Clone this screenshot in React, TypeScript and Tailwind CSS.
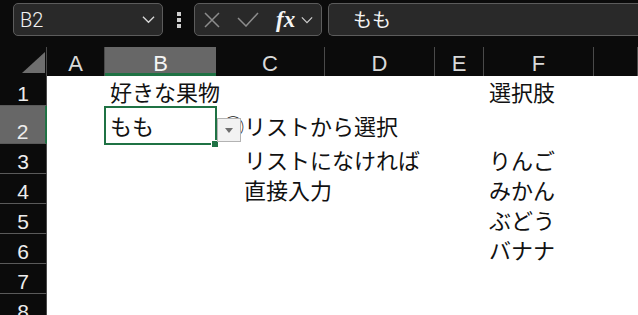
import React from 'react';

const cols = ['A', 'B', 'C', 'D', 'E', 'F', ''];
const rows = [1, 2, 3, 4, 5, 6, 7, 8];

const cells: Record<string, string> = {
  B1: '好きな果物',
  F1: '選択肢',
  B2: 'もも',
  C2: '①リストから選択',
  C3: '\u3000リストになければ',
  C4: '\u3000直接入力',
  F3: 'りんご',
  F4: 'みかん',
  F5: 'ぶどう',
  F6: 'バナナ',
};

function Chevron({ className }: { className?: string }) {
  return (
    <svg viewBox="0 0 14 9" className={className} fill="none" stroke="currentColor" strokeWidth="1.4">
      <path d="M1 1.5 L7 7.5 L13 1.5" />
    </svg>
  );
}

function FormulaBar() {
  return (
    <div className="h-[47px] bg-[#0b0b0b] flex items-start pt-[3px] pl-[13px] overflow-hidden">
      <div className="w-[150px] h-[33px] rounded-[5px] border border-[#5c5c5c] bg-[#292929] flex items-center justify-between pl-[6px] pr-[7px]">
        <span className="text-[20px] text-[#f2f2f2] font-light" style={{ fontFamily: 'Roboto, "Liberation Sans", sans-serif' }}>
          B2
        </span>
        <Chevron className="w-[13px] h-[9px] text-[#d8d8d8]" />
      </div>
      <div className="w-[31px] h-[33px] flex flex-col items-center justify-center gap-[2px]">
        <div className="w-[4px] h-[4px] bg-[#cfcfcf]" />
        <div className="w-[4px] h-[4px] bg-[#cfcfcf]" />
        <div className="w-[4px] h-[4px] bg-[#cfcfcf]" />
      </div>
      <div className="w-[128px] h-[33px] rounded-[5px] border border-[#5c5c5c] bg-[#292929] flex items-center pl-[9px]">
        <svg viewBox="0 0 16 16" className="w-[16px] h-[16px] text-[#8c8c8c]" fill="none" stroke="currentColor" strokeWidth="1.5">
          <path d="M1 1 L15 15 M15 1 L1 15" />
        </svg>
        <svg viewBox="0 0 22 15" className="w-[22px] h-[15px] ml-[17px] text-[#8c8c8c]" fill="none" stroke="currentColor" strokeWidth="1.5">
          <path d="M1 6 L9 14 L21 1" />
        </svg>
        <span
          className="ml-[17px] text-[23px] italic font-bold text-[#f4f4f4] leading-none"
          style={{ fontFamily: '"Liberation Serif", "DejaVu Serif", serif' }}
        >
          fx
        </span>
        <Chevron className="ml-[6px] w-[12px] h-[8px] text-[#cfcfcf]" />
      </div>
      <div className="ml-[6px] flex-1 h-[33px] rounded-l-[5px] border border-r-0 border-[#5c5c5c] bg-[#292929] flex items-center pl-[24px] mr-[-8px]">
        <span className="text-[19px] text-[#f4f4f4]" style={{ fontFamily: '"Noto Sans CJK JP", sans-serif' }}>
          もも
        </span>
      </div>
    </div>
  );
}

export default function App() {
  return (
    <div className="w-[638px] h-[315px] overflow-hidden bg-white">
      <FormulaBar />
      <div className="relative">
        <div className="grid grid-cols-[47px_58px_111px_109px_110px_49px_110px_1fr] grid-rows-[29px_30px_38px_30px_30px_30px_30px_30px_30px]">
          <div className="bg-[#0b0b0b] border-r border-[#4a4a4a] relative">
            <svg viewBox="0 0 23 21" className="absolute left-[22px] top-[5px] w-[23px] h-[21px]">
              <path d="M23 0 L23 21 L0 21 Z" fill="#6e6e6e" />
            </svg>
          </div>
          {cols.map((c) => (
            <div
              key={c || 'G'}
              className={
                c === 'B'
                  ? 'bg-[#676767] border-b-[3px] border-[#1f7244] flex justify-center items-start pt-[6px]'
                  : 'bg-[#0b0b0b] border-r border-[#4a4a4a] flex justify-center items-start pt-[6px]'
              }
            >
              <span
                className={c === 'B' ? 'text-[22px] leading-none text-[#f4f4f4]' : 'text-[22px] leading-none text-[#d9d9d9]'}
                style={{ fontFamily: '"Liberation Sans", Arial, sans-serif' }}
              >
                {c}
              </span>
            </div>
          ))}
          {rows.map((r) => (
            <React.Fragment key={r}>
              <div
                className={
                  r === 2
                    ? 'bg-[#676767] border-r-2 border-[#1f7244] border-b border-b-[#5a5a5a] flex justify-center items-end pb-[1px]'
                    : 'bg-[#0b0b0b] border-r border-r-[#4a4a4a] border-b border-b-[#5a5a5a] flex justify-center items-end pb-[1px]'
                }
              >
                <span className="text-[21px] leading-none text-[#ededed]" style={{ fontFamily: '"Liberation Sans", Arial, sans-serif' }}>
                  {r}
                </span>
              </div>
              {cols.map((c) => {
                const v = cells[`${c}${r}`];
                return (
                  <div
                    key={c || 'G'}
                    className={c === 'C' ? 'flex items-center pl-[6px] whitespace-nowrap' : 'flex items-center pl-[5px] whitespace-nowrap'}
                  >
                    {v && (
                      <span
                        className="text-[22px] leading-none text-[#111]"
                        style={{ fontFamily: '"Noto Sans CJK JP", sans-serif' }}
                      >
                        {v}
                      </span>
                    )}
                  </div>
                );
              })}
            </React.Fragment>
          ))}
        </div>

        {/* active cell B2 */}
        <div className="absolute left-[104px] top-[59px] w-[113px] h-[39px] border-2 border-[#1f7244]" />
        <div className="absolute left-[211px] top-[93px] w-[8px] h-[8px] bg-[#1f7244] border border-white" />

        {/* validation dropdown */}
        <div className="absolute left-[217px] top-[71px] w-[24px] h-[24px] bg-[#f2f2f2] border border-[#b3b3b3] flex items-center justify-center">
          <svg viewBox="0 0 8 5" className="w-[8px] h-[5px]">
            <path d="M0 0 L8 0 L4 5 Z" fill="#6f6f6f" />
          </svg>
        </div>
      </div>
    </div>
  );
}
